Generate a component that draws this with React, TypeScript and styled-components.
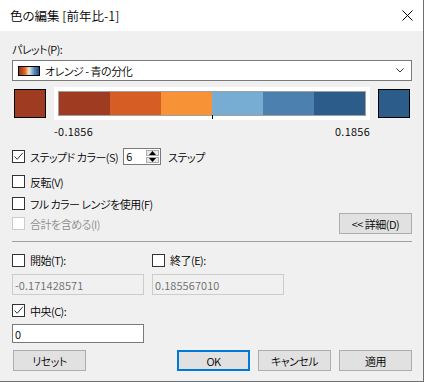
import styled, { createGlobalStyle } from 'styled-components';

const GlobalStyle = createGlobalStyle`
    html, body {
        margin: 0;
        padding: 0;
        background: #f0f0f0;
    }
    * {
        box-sizing: border-box;
    }
`

const Window = styled.div`
    width: 424px;
    height: 382px;
    background: #f0f0f0;
    border-right: 1px solid #6e6e6e;
    border-bottom: 1px solid #6e6e6e;
    font-family: 'Noto Sans CJK JP', 'Noto Sans', sans-serif;
    font-size: 11px;
    font-weight: 350;
    font-feature-settings: 'palt';
    letter-spacing: -0.5px;
    color: #000;
    display: flex;
    flex-direction: column;
`

const TitleBar = styled.div`
    height: 31px;
    background: #fff;
    display: flex;
    align-items: center;
    justify-content: space-between;
    padding: 0 10px 0 10px;
`

const TitleText = styled.span`
    font-size: 12.5px;
    line-height: 14px;
    letter-spacing: 0;
`

const Body = styled.div`
    display: flex;
    flex-direction: column;
    padding: 0 11px 0 12px;
`

const Label = styled.div<{ $top: number }>`
    margin-top: ${(p) => p.$top}px;
    height: 14px;
    line-height: 14px;
`

const Select = styled.div`
    margin-top: 4px;
    height: 21px;
    background: #fff;
    border: 1px solid #7a7a7a;
    display: flex;
    align-items: center;
    padding: 0 7px 0 5px;
    gap: 5px;
`

const GradientIcon = styled.div`
    width: 22px;
    height: 10px;
    border: 1px solid #000;
    background: linear-gradient(to right, #8e3217, #e0662a 30%, #fbd9a8 48%, #c3dbea 55%, #5a8fbd 75%, #1f4d7a);
`

const SelectText = styled.span`
    flex: 1;
    line-height: 14px;
`

const RampRow = styled.div`
    margin-top: 6px;
    height: 33px;
    display: flex;
    align-items: center;
`

const Swatch = styled.div<{ $color: string; $left: number }>`
    width: 32px;
    height: 29px;
    margin-left: ${(p) => p.$left}px;
    border: 1px solid #000;
    background: ${(p) => p.$color};
`

const RampBox = styled.div`
    margin-left: 8px;
    width: 316px;
    height: 33px;
    background: #fff;
    padding: 4px;
    position: relative;
`

const Ramp = styled.div`
    height: 25px;
    border: 1px solid #a0a0a0;
    display: flex;
`

const RampStep = styled.div<{ $color: string }>`
    flex: 1;
    background: ${(p) => p.$color};
`

const Tick = styled.div`
    position: absolute;
    left: 158px;
    top: 28px;
    width: 1px;
    height: 4px;
    background: #000;
`

const RangeLabels = styled.div`
    margin-top: 4px;
    margin-left: 42px;
    width: 316px;
    height: 14px;
    line-height: 14px;
    display: flex;
    justify-content: space-between;
    font-size: 11px;
    letter-spacing: 0.3px;
`

const Row = styled.div<{ $top: number; $h: number }>`
    margin-top: ${(p) => p.$top}px;
    height: ${(p) => p.$h}px;
    display: flex;
    align-items: center;
`

const Check = styled.label<{ $disabled?: boolean }>`
    display: flex;
    align-items: center;
    gap: 5px;
    line-height: 14px;
    color: ${(p) => (p.$disabled ? '#8d8d8d' : '#000')};
`

const Box = styled.span<{ $disabled?: boolean }>`
    width: 13px;
    height: 13px;
    border: 1px solid ${(p) => (p.$disabled ? '#cccccc' : '#333')};
    background: #fff;
    display: flex;
    align-items: center;
    justify-content: center;
`

const Spinner = styled.div`
    margin-left: 5px;
    width: 38px;
    height: 17px;
    border: 1px solid #7a7a7a;
    background: #fff;
    display: flex;
`

const SpinValue = styled.span`
    flex: 1;
    padding-left: 2px;
    line-height: 15px;
`

const SpinButtons = styled.div`
    width: 14px;
    display: flex;
    flex-direction: column;
    padding: 1px 1px 1px 0;
    gap: 1px;
`

const SpinButton = styled.div`
    flex: 1;
    background: #e6e6e6;
    border: 1px solid #adadad;
    display: flex;
    align-items: center;
    justify-content: center;
`

const After = styled.span`
    margin-left: 7px;
    line-height: 14px;
`

const Button = styled.div<{ $default?: boolean }>`
    width: 73px;
    height: 21px;
    background: #e1e1e1;
    border: ${(p) => (p.$default ? '2px solid #0078d7' : '1px solid #adadad')};
    display: flex;
    align-items: center;
    justify-content: center;
    line-height: 14px;
`

const Separator = styled.div`
    margin-top: 7px;
    height: 1px;
    background: #a0a0a0;
`

const Columns = styled.div<{ $top: number; $h: number }>`
    margin-top: ${(p) => p.$top}px;
    height: ${(p) => p.$h}px;
    display: grid;
    grid-template-columns: 132px 132px;
    gap: 8px;
    align-items: center;
`

const TextField = styled.div<{ $disabled?: boolean; $h: number }>`
    height: ${(p) => p.$h}px;
    border: 1px solid ${(p) => (p.$disabled ? '#cccccc' : '#7a7a7a')};
    background: ${(p) => (p.$disabled ? '#f0f0f0' : '#fff')};
    color: ${(p) => (p.$disabled ? '#6d6d6d' : '#000')};
    display: flex;
    align-items: center;
    padding-left: 2px;
    font-size: 11px;
    letter-spacing: 0.1px;
`

const Footer = styled.div`
    margin-top: 7px;
    display: flex;
    align-items: center;
    padding-left: 1px;
    gap: 8px;
`

const Spacer = styled.div`
    flex: 1;
`

const CheckMark = () => (
    <svg width='11' height='11' viewBox='0 0 11 11'>
        <path d='M1.5 5.5 L4.2 8.3 L9.8 1.8' fill='none' stroke='#333' strokeWidth='1' />
    </svg>
)

const CheckBox = ({ label, checked, disabled }: { label: string; checked?: boolean; disabled?: boolean }) => (
    <Check $disabled={disabled}>
        <Box $disabled={disabled}>{checked && <CheckMark />}</Box>
        {label}
    </Check>
)

const steps = ['#9e3b20', '#d65d23', '#f79236', '#77add3', '#4c80ae', '#2c5c8a'];

const App = () => {
    return (
        <Window>
            <GlobalStyle />
            <TitleBar>
                <TitleText>色の編集 [前年比-1]</TitleText>
                <svg width='11' height='11' viewBox='0 0 11 11'>
                    <path d='M0.5 0.5 L10.5 10.5 M10.5 0.5 L0.5 10.5' stroke='#000' strokeWidth='1' />
                </svg>
            </TitleBar>
            <Body>
                <Label $top={11}>パレット(P):</Label>
                <Select>
                    <GradientIcon />
                    <SelectText>オレンジ - 青の分化</SelectText>
                    <svg width='8' height='5' viewBox='0 0 8 5'>
                        <path d='M0.5 0.5 L4 4 L7.5 0.5' fill='none' stroke='#333' strokeWidth='1' />
                    </svg>
                </Select>
                <RampRow>
                    <Swatch $color='#9e3b20' $left={2} />
                    <RampBox>
                        <Ramp>
                            {steps.map((c) => (
                                <RampStep key={c} $color={c} />
                            ))}
                        </Ramp>
                        <Tick />
                    </RampBox>
                    <Swatch $color='#2c5c8a' $left={8} />
                </RampRow>
                <RangeLabels>
                    <span>-0.1856</span>
                    <span>0.1856</span>
                </RangeLabels>
                <Row $top={10} $h={17}>
                    <CheckBox label='ステップド カラー(S)' checked />
                    <Spinner>
                        <SpinValue>6</SpinValue>
                        <SpinButtons>
                            <SpinButton>
                                <svg width='7' height='4' viewBox='0 0 7 4'>
                                    <path d='M0 4 L3.5 0 L7 4 Z' fill='#000' />
                                </svg>
                            </SpinButton>
                            <SpinButton>
                                <svg width='7' height='4' viewBox='0 0 7 4'>
                                    <path d='M0 0 L3.5 4 L7 0 Z' fill='#000' />
                                </svg>
                            </SpinButton>
                        </SpinButtons>
                    </Spinner>
                    <After>ステップ</After>
                </Row>
                <Row $top={10} $h={13}>
                    <CheckBox label='反転(V)' />
                </Row>
                <Row $top={9} $h={13}>
                    <CheckBox label='フル カラー レンジを使用(F)' />
                </Row>
                <Row $top={3} $h={21}>
                    <CheckBox label='合計を含める(I)' disabled />
                    <Spacer />
                    <Button>&lt;&lt; 詳細(D)</Button>
                </Row>
                <Separator />
                <Columns $top={11} $h={13}>
                    <CheckBox label='開始(T):' />
                    <CheckBox label='終了(E):' />
                </Columns>
                <Columns $top={8} $h={21}>
                    <TextField $disabled $h={21}>-0.171428571</TextField>
                    <TextField $disabled $h={21}>0.185567010</TextField>
                </Columns>
                <Row $top={9} $h={13}>
                    <CheckBox label='中央(C):' checked />
                </Row>
                <Columns $top={7} $h={19}>
                    <TextField $h={19}>0</TextField>
                </Columns>
                <Footer>
                    <Button>リセット</Button>
                    <Spacer />
                    <Button $default>OK</Button>
                    <Button>キャンセル</Button>
                    <Button>適用</Button>
                </Footer>
            </Body>
        </Window>
    )
}

export default App;
